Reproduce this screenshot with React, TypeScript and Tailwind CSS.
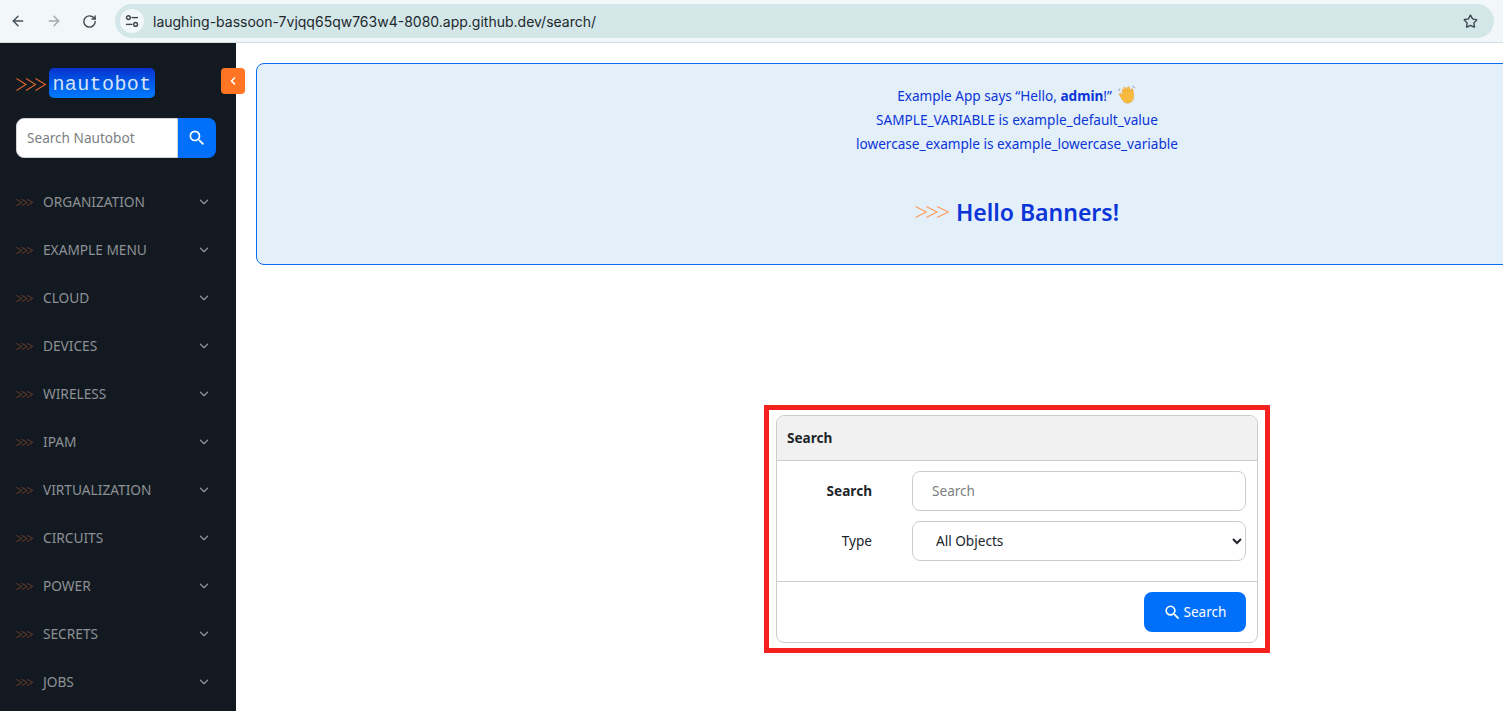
import { ArrowLeft, ArrowRight, ChevronDown, ChevronLeft, RotateCw, Star } from 'lucide-react';

const menuItems = [
  'ORGANIZATION',
  'EXAMPLE MENU',
  'CLOUD',
  'DEVICES',
  'WIRELESS',
  'IPAM',
  'VIRTUALIZATION',
  'CIRCUITS',
  'POWER',
  'SECRETS',
  'JOBS',
];

// the three ">>>" chevrons of the logo
function Chevrons({ className }: { className: string }) {
  return (
    <svg viewBox="0 0 30 12" preserveAspectRatio="none" fill="none" stroke="currentColor" strokeWidth="1" className={className}>
      <path d="M0.5 0.5 L10 6 L0.5 11.5" />
      <path d="M10 0.5 L19.5 6 L10 11.5" />
      <path d="M19.5 0.5 L29.5 6 L19.5 11.5" />
    </svg>
  );
}

function Magnify({ className }: { className: string }) {
  return (
    <svg viewBox="0 0 24 24" fill="currentColor" className={className}>
      <path d="M9.5,3A6.5,6.5 0 0,1 16,9.5C16,11.11 15.41,12.59 14.44,13.73L14.71,14H15.5L20.5,19L19,20.5L14,15.5V14.71L13.73,14.44C12.59,15.41 11.11,16 9.5,16A6.5,6.5 0 0,1 3,9.5A6.5,6.5 0 0,1 9.5,3M9.5,5C7,5 5,7 5,9.5C5,12 7,14 9.5,14C12,14 14,12 14,9.5C14,7 12,5 9.5,5Z" />
    </svg>
  );
}

function SiteInfoIcon() {
  return (
    <svg viewBox="0 0 14 14" fill="none" stroke="#3c464c" strokeWidth="1.4" className="h-[14px] w-[14px]">
      <circle cx="3.4" cy="3.6" r="1.9" />
      <path d="M6.6 3.6 H13" />
      <circle cx="10.6" cy="10.4" r="1.9" />
      <path d="M1 10.4 H7.4" />
    </svg>
  );
}

function WavingHand() {
  return (
    <svg viewBox="0 0 20 20" className="ml-[5px] inline-block h-[20px] w-[20px] align-[-4px]">
      <path d="M1.5 6 L3 3.5 M15.5 1 L18 3" stroke="#a9b4bd" strokeWidth="1.2" fill="none" />
      <path
        d="M5 5 C5.8 4.2 6.8 4.6 7.4 5.4 L6.8 3.6 C6.5 2.4 8 1.8 8.7 2.8 L10.6 6 L10.4 2.9 C10.4 1.6 12.1 1.4 12.5 2.6 L13.6 6.4 L14 4.6 C14.4 3.4 16 3.7 16 5 C16.2 8 17 10.5 16.4 13.2 C15.6 17 12 19 8.8 17.8 C6.6 17 5.4 15 4 12.6 L2.4 9.8 C1.8 8.6 3.2 7.6 4.2 8.6 L6 10.6 Z"
        fill="#f7b93e"
        stroke="#e39a25"
        strokeWidth="0.5"
      />
    </svg>
  );
}

function BrowserBar() {
  return (
    <div className="flex h-[43px] shrink-0 items-center border-b border-[#d5dcdf] bg-[#f2f7fa]">
      <ArrowLeft className="ml-[10px] h-[16px] w-[16px] text-[#44525a]" strokeWidth={2.2} />
      <ArrowRight className="ml-[20px] h-[16px] w-[16px] text-[#a2aaae]" strokeWidth={2.2} />
      <RotateCw className="ml-[20px] h-[15px] w-[15px] text-[#3c464c]" strokeWidth={2.2} />
      <div className="ml-[18px] mr-[9px] flex h-[34px] flex-1 items-center rounded-full bg-[#d3e6e8] pl-[5px] pr-[16px]">
        <div className="flex h-[24px] w-[24px] items-center justify-center rounded-full bg-[#f2f7fa]">
          <SiteInfoIcon />
        </div>
        <span className="ml-[9px] flex-1 font-['Inter',sans-serif] text-[14px] text-[#22292d]">
          laughing-bassoon-7vjqq65qw763w4-8080.app.github.dev/search/
        </span>
        <Star className="h-[15px] w-[15px] text-[#3c464c]" strokeWidth={2.2} />
      </div>
    </div>
  );
}

function Sidebar() {
  return (
    <aside className="relative w-[236px] shrink-0 bg-[#121921]">
      <div className="ml-[16px] mt-[25px] flex items-center">
        <Chevrons className="mt-[3px] h-[13px] w-[30px] text-[#e8692a]" />
        <div className="ml-[3px] flex h-[30px] w-[106px] items-center justify-center rounded-[5px] bg-gradient-to-b from-[#0a31cf] to-[#007bff] pt-[3px] font-['Liberation_Mono',monospace] text-[20px] tracking-[0.4px] text-[#d5e2f5]">
          nautobot
        </div>
      </div>

      <div className="ml-[16px] mt-[20px] flex h-[40px] w-[200px]">
        <div className="flex flex-1 items-center rounded-l-[8px] border border-[#ced4da] bg-white pl-[10px] text-[13.6px] text-[#7b7f83]">
          Search Nautobot
        </div>
        <div className="flex w-[38px] items-center justify-center rounded-r-[8px] bg-[#0070fb]">
          <Magnify className="h-[20px] w-[20px] text-white" />
        </div>
      </div>

      <nav className="mt-[20px]">
        {menuItems.map((item) => (
          <div key={item} className="flex h-[48px] items-center pl-[16px] pr-[25px]">
            <Chevrons className="h-[7px] w-[17px] text-[#b4552a]" />
            <span className="ml-[10px] flex-1 text-[13.7px] text-[#8e9194]">{item}</span>
            <ChevronDown className="h-[14px] w-[14px] text-[#8e9194]" strokeWidth={2.4} />
          </div>
        ))}
      </nav>

      <button className="absolute left-[221px] top-[25px] flex h-[26px] w-[24px] items-center justify-center rounded-[4px] bg-[#ff7524]">
        <ChevronLeft className="h-[12px] w-[12px] text-white" strokeWidth={3.5} />
      </button>
    </aside>
  );
}

function SearchCard() {
  return (
    <div className="w-[506px] border-[5px] border-[#f5211f] bg-white px-[7px] py-[5px]">
      <div className="overflow-hidden rounded-[8px] border border-[#cdcdcd]">
        <div className="flex h-[45px] items-center border-b border-[#cdcdcd] bg-[#f1f1f1] pl-[10px] text-[13.6px] font-bold text-[#212529]">
          Search
        </div>
        <div className="flex flex-col gap-[10px] pb-[20px] pl-[10px] pr-[11px] pt-[10px]">
          <div className="flex items-center">
            <label className="w-[85px] text-right text-[13.6px] font-bold text-[#212529]">Search</label>
            <input
              placeholder="Search"
              className="ml-[40px] h-[40px] flex-1 rounded-[8px] border border-[#cdcdcd] px-[19px] pb-[2px] text-[13.6px] outline-none placeholder:text-[#7b7f83]"
            />
          </div>
          <div className="flex items-center">
            <label className="w-[85px] text-right text-[13.6px] text-[#212529]">Type</label>
            <select className="ml-[40px] h-[40px] flex-1 rounded-[8px] border border-[#cdcdcd] bg-white px-[19px] pb-[2px] text-[13.6px] text-[#212529] outline-none">
              <option>All Objects</option>
            </select>
          </div>
        </div>
        <div className="flex justify-end border-t border-[#cdcdcd] py-[10px] pl-[10px] pr-[11px]">
          <button className="flex h-[40px] w-[102px] items-center justify-center gap-[1px] rounded-[8px] bg-[#0070fb] text-[13.6px] text-white">
            <Magnify className="h-[19px] w-[19px]" />
            Search
          </button>
        </div>
      </div>
    </div>
  );
}

export default function App() {
  return (
    <div className="flex h-screen w-screen flex-col overflow-hidden bg-white font-['Noto_Sans',sans-serif]">
      <BrowserBar />
      <div className="flex min-h-0 flex-1">
        <Sidebar />
        <main className="flex w-[1562px] shrink-0 flex-col items-center px-[20px] pt-[20px]">
          <div className="h-[202px] w-full rounded-[8px] border border-[#0b6cf0] bg-[#e3eff9] pt-[20px] text-center text-[13.6px] leading-[24px] text-[#0b35d8]">
            <div>
              Example App says “Hello, <b>admin</b>!”
              <WavingHand />
            </div>
            <div>SAMPLE_VARIABLE is example_default_value</div>
            <div>lowercase_example is example_lowercase_variable</div>
            <div className="mt-[38px] flex items-center justify-center gap-[7px] text-[23px] font-semibold leading-[36px]">
              <Chevrons className="h-[12px] w-[34px] text-[#ff9a5c]" />
              Hello Banners!
            </div>
          </div>
          <div className="mt-[140px]">
            <SearchCard />
          </div>
        </main>
      </div>
    </div>
  );
}
